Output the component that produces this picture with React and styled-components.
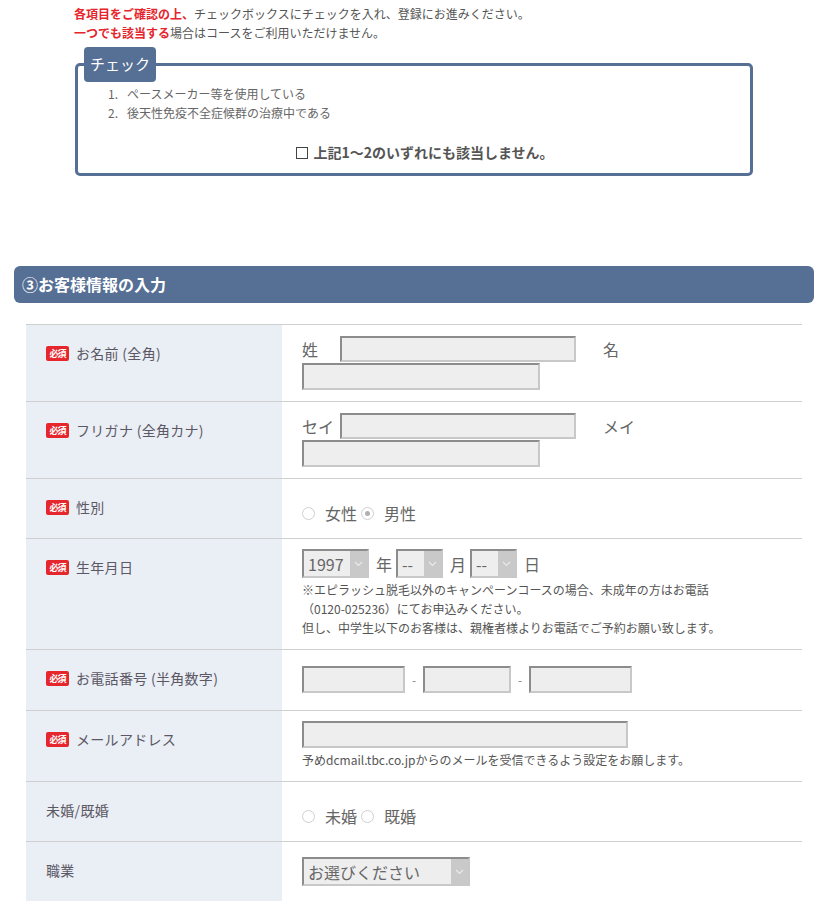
import React from "react";
import styled, { createGlobalStyle } from "styled-components";

// Global page reset
const GlobalStyle = createGlobalStyle`
  body {
    margin: 0;
    background: #fff;
    font-family: "Noto Sans CJK JP", "Noto Sans", sans-serif;
    color: #555;
  }
`;

const Page = styled.div`
  width: 827px;
  padding-top: 4px;
`;

const Intro = styled.div`
  padding-left: 74px;
  font-size: 12px;
  line-height: 19px;
  color: #555;
`;

const Red = styled.strong`
  color: #e5252b;
  font-weight: bold;
`;

const CheckBox = styled.fieldset`
  box-sizing: border-box;
  width: 678px;
  margin: 5px 0 0 75px;
  padding: 2px 0 11px;
  border: 3px solid #566f94;
  border-radius: 5px;
`;

const CheckLegend = styled.legend`
  box-sizing: border-box;
  display: flex;
  align-items: center;
  justify-content: center;
  width: 72px;
  height: 35px;
  margin-left: 6px;
  padding: 0 0 2px;
  font-size: 15px;
  color: #fff;
  background: #566f94;
  border-radius: 4px;
`;

const CheckList = styled.ol`
  margin: 0;
  padding: 0 0 0 30px;
  list-style: none;
`;

const CheckItem = styled.li`
  display: flex;
  font-size: 12px;
  line-height: 19px;
  color: #666;
`;

const ItemNum = styled.span`
  width: 19px;
`;

const AgreeLine = styled.label`
  display: flex;
  align-items: center;
  justify-content: center;
  gap: 5px;
  margin-top: 21px;
  padding-left: 22px;
  font-size: 14px;
  line-height: 19px;
  font-weight: bold;
  color: #555;
`;

const Square = styled.span`
  box-sizing: border-box;
  width: 12px;
  height: 12px;
  border: 1px solid #444;
  background: #fff;
`;

const SectionHead = styled.h2`
  box-sizing: border-box;
  width: 800px;
  height: 37px;
  margin: 90px 0 0 14px;
  padding-left: 8px;
  line-height: 37px;
  font-size: 16px;
  font-weight: bold;
  color: #fff;
  background: #566f94;
  border-radius: 6px;
`;

const Table = styled.div`
  width: 776px;
  margin: 21px 0 0 26px;
`;

const Row = styled.div`
  display: grid;
  grid-template-columns: 256px 1fr;
  border-top: 1px solid #cfcfcf;
`;

const LabelCell = styled.div`
  display: flex;
  align-items: flex-start;
  gap: 7px;
  padding: 19px 20px 0;
  background: #eaeef5;
  font-size: 14px;
  line-height: 19px;
  letter-spacing: 0.3px;
  color: #5b5864;
`;

const Badge = styled.span`
  flex: none;
  width: 23px;
  height: 15px;
  margin-top: 2px;
  border-radius: 2px;
  background: #e5262c;
  color: #fff;
  font-size: 9px;
  font-weight: bold;
  line-height: 15px;
  text-align: center;
  letter-spacing: -1px;
`;

const ValueCell = styled.div`
  padding: ${(p) => p.$pad || "11px 20px 11px"};
  font-size: 16px;
  color: #666;
`;

const Line = styled.div`
  display: flex;
  flex-wrap: wrap;
  align-items: center;
  row-gap: 1px;
`;

const FieldName = styled.span`
  width: 38px;
  line-height: 26px;
  margin-left: ${(p) => p.$ml || 0};
`;

const TextInput = styled.input`
  box-sizing: border-box;
  width: ${(p) => p.$w}px;
  height: ${(p) => p.$h || 27}px;
  margin: 0;
  padding: 0 4px;
  background: #eeeeee;
  border-style: solid;
  border-width: 2px;
  border-color: #8c8c8c #c8c8c8 #c8c8c8 #8c8c8c;
  font: inherit;
  outline: none;
`;

const Dash = styled.span`
  width: 18px;
  text-align: center;
  font-size: 12px;
  color: #888;
`;

const Note = styled.p`
  margin: 2px 0 0;
  font-size: 12px;
  line-height: 19px;
  color: #555;
`;

const Radios = styled.div`
  display: flex;
  align-items: center;
  line-height: 20px;
`;

const Radio = styled.span`
  box-sizing: border-box;
  width: 13px;
  height: 13px;
  margin-right: 10px;
  border: 1px solid #cfcfcf;
  border-radius: 50%;
  background: #fff;
  display: flex;
  align-items: center;
  justify-content: center;
  &::after {
    content: "";
    width: 5px;
    height: 5px;
    border-radius: 50%;
    background: ${(p) => (p.$on ? "#b0b0b0" : "transparent")};
  }
`;

const RadioText = styled.span`
  margin-right: 4px;
`;

const SelectBox = styled.span`
  box-sizing: border-box;
  display: inline-flex;
  width: ${(p) => p.$w}px;
  height: 29px;
  background: #eeeeee;
  border-style: solid;
  border-width: 2px;
  border-color: #8c8c8c #c8c8c8 #c8c8c8 #8c8c8c;
  margin-right: ${(p) => p.$mr || 0};
`;

const SelectEl = styled.select`
  flex: 1;
  min-width: 0;
  appearance: none;
  border: 0;
  background: transparent;
  padding: 0 0 0 4px;
  font: inherit;
  font-size: 16px;
  color: #666;
  outline: none;
`;

const Arrow = styled.span`
  flex: none;
  width: 17px;
  background: #c9c9c9;
  display: flex;
  align-items: center;
  justify-content: center;
`;

const Unit = styled.span`
  margin-right: 4px;
`;

const Chevron = () => (
  <svg width="9" height="6" viewBox="0 0 9 6">
    <path d="M1 1l3.5 3.5L8 1" fill="none" stroke="#eaeaea" strokeWidth="1.2" />
  </svg>
);

const Select = ({ w, mr, value }) => (
  <SelectBox $w={w} $mr={mr}>
    <SelectEl defaultValue={value}>
      <option>{value}</option>
    </SelectEl>
    <Arrow>
      <Chevron />
    </Arrow>
  </SelectBox>
);

const Label = ({ req, children }) => (
  <LabelCell>
    {req && <Badge>必須</Badge>}
    <span>{children}</span>
  </LabelCell>
);

export default function App() {
  return (
    <Page>
      <GlobalStyle />
      <Intro>
        <div>
          <Red>各項目をご確認の上、</Red>チェックボックスにチェックを入れ、登録にお進みください。
        </div>
        <div>
          <Red>一つでも該当する</Red>場合はコースをご利用いただけません。
        </div>
      </Intro>

      <CheckBox>
        <CheckLegend>チェック</CheckLegend>
        <CheckList>
          <CheckItem>
            <ItemNum>1.</ItemNum>ペースメーカー等を使用している
          </CheckItem>
          <CheckItem>
            <ItemNum>2.</ItemNum>後天性免疫不全症候群の治療中である
          </CheckItem>
        </CheckList>
        <AgreeLine>
          <Square />
          上記1～2のいずれにも該当しません。
        </AgreeLine>
      </CheckBox>

      <SectionHead>③お客様情報の入力</SectionHead>

      <Table>
        <Row>
          <Label req>お名前 (全角)</Label>
          <ValueCell>
            <Line>
              <FieldName>姓</FieldName>
              <TextInput $w={236} $h={26} />
              <FieldName $ml="27px">名</FieldName>
              <TextInput $w={238} />
            </Line>
          </ValueCell>
        </Row>
        <Row>
          <Label req>フリガナ (全角カナ)</Label>
          <ValueCell>
            <Line>
              <FieldName>セイ</FieldName>
              <TextInput $w={236} $h={26} />
              <FieldName $ml="27px">メイ</FieldName>
              <TextInput $w={238} />
            </Line>
          </ValueCell>
        </Row>
        <Row>
          <Label req>性別</Label>
          <ValueCell $pad="24px 20px 15px">
            <Radios>
              <Radio />
              <RadioText>女性</RadioText>
              <Radio $on />
              <RadioText>男性</RadioText>
            </Radios>
          </ValueCell>
        </Row>
        <Row>
          <Label req>生年月日</Label>
          <ValueCell $pad="10px 20px 12px">
            <Line>
              <Select w={67} mr="7px" value="1997" />
              <Unit>年</Unit>
              <Select w={47} mr="7px" value="--" />
              <Unit>月</Unit>
              <Select w={47} mr="7px" value="--" />
              <Unit>日</Unit>
            </Line>
            <Note>
              ※エピラッシュ脱毛以外のキャンペーンコースの場合、未成年の方はお電話
              <br />
              （0120-025236）にてお申込みください。
              <br />
              但し、中学生以下のお客様は、親権者様よりお電話でご予約お願い致します。
            </Note>
          </ValueCell>
        </Row>
        <Row>
          <Label req>お電話番号 (半角数字)</Label>
          <ValueCell $pad="16px 20px 17px">
            <Line>
              <TextInput $w={103} />
              <Dash>-</Dash>
              <TextInput $w={88} />
              <Dash>-</Dash>
              <TextInput $w={103} />
            </Line>
          </ValueCell>
        </Row>
        <Row>
          <Label req>メールアドレス</Label>
          <ValueCell $pad="10px 20px 12px">
            <Line>
              <TextInput $w={326} />
            </Line>
            <Note>予めdcmail.tbc.co.jpからのメールを受信できるよう設定をお願します。</Note>
          </ValueCell>
        </Row>
        <Row>
          <Label>未婚/既婚</Label>
          <ValueCell $pad="24px 20px 15px">
            <Radios>
              <Radio />
              <RadioText>未婚</RadioText>
              <Radio />
              <RadioText>既婚</RadioText>
            </Radios>
          </ValueCell>
        </Row>
        <Row>
          <Label>職業</Label>
          <ValueCell $pad="15px 20px 20px">
            <Line>
              <Select w={168} value="お選びください" />
            </Line>
          </ValueCell>
        </Row>
      </Table>
    </Page>
  );
}
